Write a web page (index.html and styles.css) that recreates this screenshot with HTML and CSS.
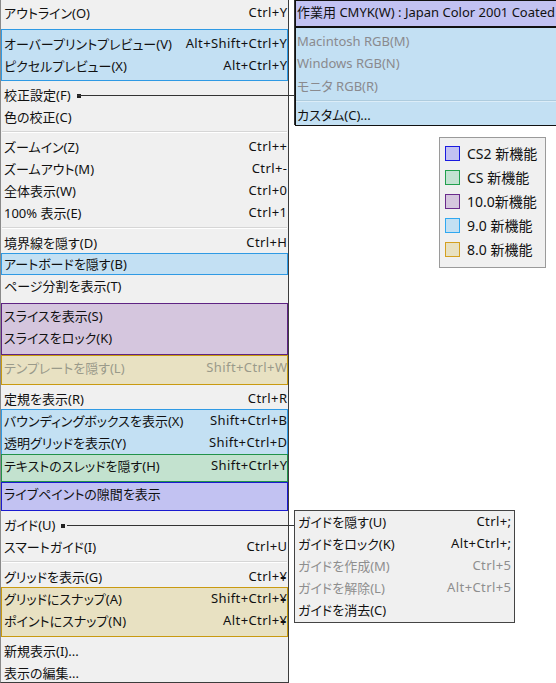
FILE: index.html
```html
<!DOCTYPE html>
<html lang="ja">
<head>
<meta charset="utf-8">
<title>表示メニュー</title>
<link rel="stylesheet" href="styles.css">
</head>
<body>
<div class="stage">
  <div class="menu">
    <div class="row first"><span>アウトライン(O)</span><span class="sc">Ctrl+Y</span></div>
    <div class="grp g90 top-blue">
      <div class="row"><span>オーバープリントプレビュー(V)</span><span class="sc">Alt+Shift+Ctrl+Y</span></div>
      <div class="row"><span>ピクセルプレビュー(X)</span><span class="sc">Alt+Ctrl+Y</span></div>
    </div>
    <div class="row after-grp"><span>校正設定(F)<i class="dot"></i></span><span></span></div>
    <div class="row"><span>色の校正(C)</span><span></span></div>
    <div class="sep"></div>
    <div class="row"><span>ズームイン(Z)</span><span class="sc">Ctrl++</span></div>
    <div class="row"><span>ズームアウト(M)</span><span class="sc">Ctrl+-</span></div>
    <div class="row"><span>全体表示(W)</span><span class="sc">Ctrl+0</span></div>
    <div class="row"><span>100% 表示(E)</span><span class="sc">Ctrl+1</span></div>
    <div class="sep"></div>
    <div class="row"><span>境界線を隠す(D)</span><span class="sc">Ctrl+H</span></div>
    <div class="grp g90 artboard">
      <div class="row short"><span>アートボードを隠す(B)</span><span></span></div>
    </div>
    <div class="row"><span>ページ分割を表示(T)</span><span></span></div>
    <div class="grp g10 slices">
      <div class="row"><span>スライスを表示(S)</span><span></span></div>
      <div class="row"><span>スライスをロック(K)</span><span></span></div>
    </div>
    <div class="grp g80 template">
      <div class="row dis"><span>テンプレートを隠す(L)</span><span class="sc">Shift+Ctrl+W</span></div>
    </div>
    <div class="row after-grp"><span>定規を表示(R)</span><span class="sc">Ctrl+R</span></div>
    <div class="grp g90 bbox">
      <div class="row"><span>バウンディングボックスを表示(X)</span><span class="sc">Shift+Ctrl+B</span></div>
      <div class="row"><span>透明グリッドを表示(Y)</span><span class="sc">Shift+Ctrl+D</span></div>
    </div>
    <div class="grp gcs thread">
      <div class="row"><span>テキストのスレッドを隠す(H)</span><span class="sc">Shift+Ctrl+Y</span></div>
    </div>
    <div class="grp gcs2 gaps">
      <div class="row"><span>ライブペイントの隙間を表示</span><span></span></div>
    </div>
    <div class="row after-grp"><span>ガイド(U)<i class="dot"></i></span><span></span></div>
    <div class="row"><span>スマートガイド(I)</span><span class="sc">Ctrl+U</span></div>
    <div class="sep"></div>
    <div class="row"><span>グリッドを表示(G)</span><span class="sc">Ctrl+¥</span></div>
    <div class="grp g80 snap">
      <div class="row"><span>グリッドにスナップ(A)</span><span class="sc">Shift+Ctrl+¥</span></div>
      <div class="row"><span>ポイントにスナップ(N)</span><span class="sc">Alt+Ctrl+¥</span></div>
    </div>
    <div class="row after-snap"><span>新規表示(I)...</span><span></span></div>
    <div class="row"><span>表示の編集...</span><span></span></div>
  </div>

  <div class="line line-proof"></div>
  <div class="line line-guide"></div>

  <div class="sub sub-proof">
    <div class="sgrp gcs2 head">
      <div class="row"><span>作業用 CMYK(W) : Japan Color 2001 Coated</span></div>
    </div>
    <div class="sgrp g90 body">
      <div class="row dis"><span>Macintosh RGB(M)</span></div>
      <div class="row dis"><span>Windows RGB(N)</span></div>
      <div class="row dis"><span>モニタ RGB(R)</span></div>
      <div class="ssep"></div>
      <div class="row last"><span>カスタム(C)...</span></div>
    </div>
  </div>

  <div class="sub sub-guide">
    <div class="row"><span>ガイドを隠す(U)</span><span class="sc">Ctrl+;</span></div>
    <div class="row"><span>ガイドをロック(K)</span><span class="sc">Alt+Ctrl+;</span></div>
    <div class="row dis"><span>ガイドを作成(M)</span><span class="sc">Ctrl+5</span></div>
    <div class="row dis"><span>ガイドを解除(L)</span><span class="sc">Alt+Ctrl+5</span></div>
    <div class="row"><span>ガイドを消去(C)</span><span></span></div>
  </div>

  <div class="legend">
    <div class="lrow"><i class="sw sw-cs2"></i><span>CS2 新機能</span></div>
    <div class="lrow"><i class="sw sw-cs"></i><span>CS 新機能</span></div>
    <div class="lrow"><i class="sw sw-10"></i><span>10.0新機能</span></div>
    <div class="lrow"><i class="sw sw-9"></i><span>9.0 新機能</span></div>
    <div class="lrow"><i class="sw sw-8"></i><span>8.0 新機能</span></div>
  </div>
</div>
</body>
</html>
```

FILE: styles.css
```css
* { box-sizing: border-box; }
html, body { margin: 0; padding: 0; background: #ffffff; }
body {
  font-family: "Noto Sans", "Noto Sans CJK JP", sans-serif;
  font-size: 13px;
  color: #111;
  font-feature-settings: "palt";
}
.stage { position: relative; width: 556px; height: 683px; overflow: hidden; }

.menu {
  width: 289px;
  height: 683px;
  background: #f0f0f0;
  border-left: 1px solid #8a8a8a;
  border-right: 1px solid #3c3c3c;
  border-bottom: 1px solid #3c3c3c;
  padding-top: 2px;
  overflow: hidden;
}
.row {
  display: flex;
  justify-content: space-between;
  align-items: center;
  height: 22px;
  padding: 0 1px 2px 3px;
  white-space: nowrap;
}
.sc { letter-spacing: 0.4px; margin-right: -0.4px; }
.row.short { height: 20px; padding-bottom: 1px; }
.row.dis { color: #8e8e8e; }
.grp .row { padding-left: 2px; padding-right: 0; }
.after-grp { margin-top: 3px; }
.after-snap { margin-top: 3px; }

.sep {
  height: 8px;
  position: relative;
}
.sep::before {
  content: "";
  position: absolute;
  left: 1px; right: 1px; top: 3px;
  height: 1px;
  background: #d6d6d6;
  box-shadow: 0 1px 0 #ffffff;
}

.grp { border: 1px solid; }
.g90 { background: #c3e0f3; border-color: #2f9ae4; }
.g10 { background: #d5c6de; border-color: #5e2383; }
.g80 { background: #e8e1c2; border-color: #c99a10; }
.gcs { background: #c3e2cf; border-color: #22924a; }
.gcs2 { background: #c2c2f2; border-color: #1a1ad0; }

.top-blue { margin-top: 5px; padding: 3px 0; }
.artboard { margin-top: -1px; }
.slices { margin-top: 6px; padding: 1px 0 5px; }
.template { padding: 1px 0 5px; }
.template .row.dis { color: #9a9a8a; }
.bbox { margin-top: -1px; }
.thread { margin-top: -1px; padding: 0 0 4px; }
.gaps { padding: 0 0 5px; }
.snap { margin-top: -1px; padding: 0 0 4px; }

.dot {
  display: inline-block;
  width: 4px; height: 4px;
  background: #222;
  margin-left: 6px;
  vertical-align: 2px;
}

.line { position: absolute; height: 1px; background: #333; }
.line-proof { left: 77px; top: 95px; width: 218px; }
.line-guide { left: 67px; top: 525px; width: 228px; }

.sub { position: absolute; }
.sub-proof {
  left: 294px; top: -1px;
  width: 264px; height: 126px;
  border: 1px solid #333;
  background: #f0f0f0;
}
.sgrp { border: 1px solid; }
.sub-proof .row { padding: 0 0 2px 1px; }
.head { padding-bottom: 3px; }
.head .row { color: #111; font-feature-settings: normal; }
.body { padding-top: 3px; height: 99px; }
.sub-proof .row.dis { color: #8a8a8e; }
.row.last { height: 20px; padding-bottom: 1px; }
.ssep { height: 8px; position: relative; }
.ssep::before {
  content: "";
  position: absolute; left: 0; right: 0; top: 3px;
  height: 1px; background: #aeccde;
  box-shadow: 0 1px 0 #dcedf8;
}

.sub-guide {
  left: 294px; top: 510px;
  width: 221px; height: 113px;
  border: 1px solid #444;
  background: #f0f0f0;
  padding-top: 0;
}
.sub-guide .row { padding: 0 3px 2px 3px; }
.sub-guide .row.dis { color: #8e8e8e; }

.legend {
  position: absolute;
  left: 439px; top: 137px;
  width: 107px; height: 131px;
  background: #f0f0f0;
  border: 1px solid #9a9a9a;
  padding: 3px 0 0 5px;
  font-size: 14px;
  font-feature-settings: normal;
}
.lrow { display: flex; align-items: center; height: 24px; white-space: nowrap; }
.sw { display: inline-block; width: 15px; height: 15px; border: 1px solid; margin-right: 7px; }
.sw-cs2 { background: #c2c2f2; border-color: #1a1ae0; }
.sw-cs { background: #c3e2d2; border-color: #22a04e; }
.sw-10 { background: #d5c6de; border-color: #6a2a8c; }
.sw-9 { background: #c3e0f3; border-color: #30a8f0; }
.sw-8 { background: #e8e1c2; border-color: #d4a020; }
```
